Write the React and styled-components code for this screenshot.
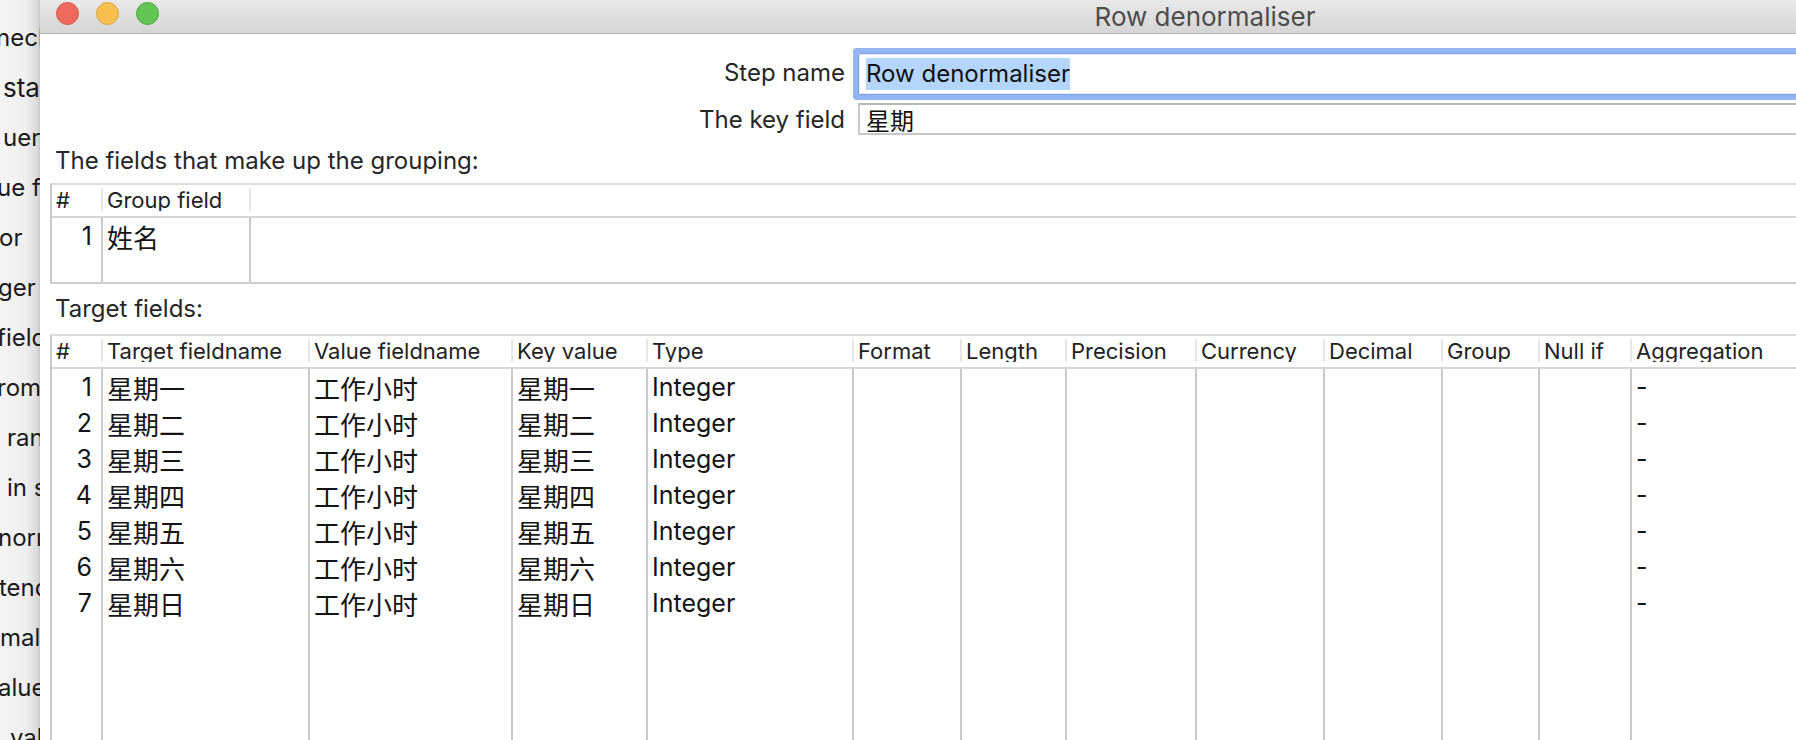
import React from 'react'
import styled, { createGlobalStyle } from 'styled-components'

const GlobalStyle = createGlobalStyle`
    html, body {
        margin: 0;
        padding: 0;
        background: #ececec;
        overflow: hidden;
    }
    body {
        font-family: Inter, "Noto Sans CJK SC", sans-serif;
        color: #1c1c1c;
    }
`

// text of the app window lying behind the dialog, only its right edge shows
const behindWords = [
    { text: 'neck', shift: -4 },
    { text: 'sta', shift: 3, size: 26 },
    { text: 'uery', shift: 3 },
    { text: 'ue field', shift: -3 },
    { text: 'or', shift: -1 },
    { text: 'ger', shift: -2 },
    { text: 'field', shift: -3 },
    { text: 'rom', shift: -3 },
    { text: 'range', shift: 7 },
    { text: 'in str', shift: 7 },
    { text: 'norm', shift: -2 },
    { text: 'tend', shift: -1 },
    { text: 'mal', shift: 0 },
    { text: 'alue', shift: -2 },
    { text: 'val', shift: 10 },
]

const days = ['一', '二', '三', '四', '五', '六', '日']
const rows = days.map((d, i) => ({
    nr: i + 1,
    target: '星期' + d,
    value: '工作小时',
    key: '星期' + d,
    type: 'Integer',
    agg: '-',
}))

const targetColumns = [
    { title: '#', width: '49px', get: r => r.nr, num: true },
    { title: 'Target fieldname', width: '207px', get: r => r.target, cjk: true },
    { title: 'Value fieldname', width: '203px', get: r => r.value, cjk: true },
    { title: 'Key value', width: '135px', get: r => r.key, cjk: true },
    { title: 'Type', width: '206px', get: r => r.type },
    { title: 'Format', width: '108px', get: () => '' },
    { title: 'Length', width: '105px', get: () => '' },
    { title: 'Precision', width: '130px', get: () => '' },
    { title: 'Currency', width: '128px', get: () => '' },
    { title: 'Decimal', width: '118px', get: () => '' },
    { title: 'Group', width: '97px', get: () => '' },
    { title: 'Null if', width: '92px', get: () => '' },
    { title: 'Aggregation', width: '1fr', get: r => r.agg },
]

const groupColumns = [
    { title: '#', width: '49px', get: r => r.nr, num: true },
    { title: 'Group field', width: '148px', get: r => r.name, cjk: true },
    { title: '', width: '1fr', get: () => '' },
]
const groupRows = [{ nr: 1, name: '姓名' }]

const FieldTable = ({ columns, data, bodyHeight, closed }) => {
    const template = columns.map(c => c.width).join(' ')
    return (
        <Table $closed={closed}>
            <HeaderRow $template={template}>
                {columns.map((c, i) => (
                    <HeaderCell key={i} $first={i === 0}>{c.title}</HeaderCell>
                ))}
            </HeaderRow>
            <Body $template={template} $height={bodyHeight}>
                {columns.map((c, i) => (
                    <BodyColumn key={i} $first={i === 0}>
                        {data.map((r, j) => (
                            <Cell key={j} $num={c.num} $cjk={c.cjk}>{c.get(r)}</Cell>
                        ))}
                    </BodyColumn>
                ))}
            </Body>
        </Table>
    )
}

const App = () => {
    return (
        <Screen>
            <GlobalStyle />
            <BehindApp>
                {behindWords.map((w, i) => (
                    <BehindLine key={i} $shift={w.shift} $size={w.size}>{w.text}</BehindLine>
                ))}
            </BehindApp>
            <Window>
                <TitleBar>
                    <Lights>
                        <Light $color='#ee6a5f' $edge='#d4574c' />
                        <Light $color='#f6bf4f' $edge='#d9a23d' />
                        <Light $color='#62c554' $edge='#4ea942' />
                    </Lights>
                    <Title>Row denormaliser</Title>
                </TitleBar>
                <Content>
                    <Form>
                        <Label $lh={40}>Step name</Label>
                        <StepInput>
                            <Selected>Row denormaliser</Selected>
                        </StepInput>
                        <Label $lh={34}>The key field</Label>
                        <KeyField>星期</KeyField>
                    </Form>
                    <SectionLabel $top={11} $bottom={7}>The fields that make up the grouping:</SectionLabel>
                    <FieldTable columns={groupColumns} data={groupRows} bodyHeight={64} closed />
                    <SectionLabel $top={10} $bottom={10}>Target fields:</SectionLabel>
                    <FieldTable columns={targetColumns} data={rows} bodyHeight={420} />
                </Content>
            </Window>
        </Screen>
    )
}

const Screen = styled.div`
    display: flex;
    width: 1796px;
    height: 740px;
    overflow: hidden;
`;

const BehindApp = styled.div`
    width: 40px;
    flex-shrink: 0;
    overflow: hidden;
    padding-top: 13px;
    box-sizing: border-box;
    background: linear-gradient(to right, #f4f4f4 0, #efefef 26px, #dadada 37px, #c6c6c6 40px);
`;

const BehindLine = styled.div`
    height: 50px;
    line-height: 50px;
    font-size: ${p => p.$size || 24}px;
    white-space: nowrap;
    color: #1a1a1a;
    margin-left: ${p => p.$shift}px;
`;

const Window = styled.div`
    width: 2330px;
    flex-shrink: 0;
    display: flex;
    flex-direction: column;
    background: #ffffff;
`;

const TitleBar = styled.div`
    height: 35px;
    box-sizing: border-box;
    display: grid;
    grid-template-columns: 1fr auto 1fr;
    align-items: start;
    background: linear-gradient(#e9e9e9, #d5d5d5);
    border-bottom: 1px solid #b4b4b4;
`;

const Lights = styled.div`
    display: flex;
    gap: 17px;
    padding: 2px 0 0 16px;
`;

const Light = styled.span`
    width: 23px;
    height: 23px;
    box-sizing: border-box;
    border-radius: 50%;
    background: ${p => p.$color};
    border: 1px solid ${p => p.$edge};
`;

const Title = styled.div`
    font-size: 26px;
    line-height: 33px;
    color: #4d4d4d;
`;

const Content = styled.div`
    padding: 19px 10px 0 10px;
    display: flex;
    flex-direction: column;
`;

const Form = styled.div`
    display: grid;
    grid-template-columns: 795px 1fr;
    column-gap: 13px;
    row-gap: 8px;
`;

const Label = styled.div`
    text-align: right;
    font-size: 24px;
    line-height: ${p => p.$lh}px;
    height: 32px;
    color: #262626;
`;

const StepInput = styled.div`
    height: 42px;
    box-sizing: border-box;
    display: flex;
    align-items: center;
    padding-left: 7px;
    border: 1px solid #7aa1e6;
    border-radius: 1px;
    box-shadow: 0 0 0 5px #93b5f3, inset 0 0 0 1px #e6edf9;
    font-size: 24px;
    color: #111;
`;

const Selected = styled.span`
    line-height: 32px;
    background: #b4d6fe;
`;

const KeyField = styled.div`
    height: 32px;
    box-sizing: border-box;
    display: flex;
    align-items: center;
    padding: 1px 0 0 6px;
    border: 2px solid #c8c8c8;
    border-top-color: #b8b8b8;
    font-size: 24px;
    color: #111;
`;

const SectionLabel = styled.div`
    height: 30px;
    line-height: 30px;
    font-size: 24px;
    color: #262626;
    padding-left: 5px;
    margin-top: ${p => p.$top}px;
    margin-bottom: ${p => p.$bottom}px;
`;

const Table = styled.div`
    border-left: 2px solid #c9c9c9;
    border-top: 2px solid #dcdcdc;
    border-bottom: ${p => (p.$closed ? '2px solid #cfcfcf' : 'none')};
`;

const HeaderRow = styled.div`
    display: grid;
    grid-template-columns: ${p => p.$template};
    height: 31px;
    border-bottom: 2px solid #d6d6d6;
`;

const HeaderCell = styled.div`
    margin: 3px 0 5px;
    display: flex;
    align-items: center;
    padding-left: 4px;
    border-left: ${p => (p.$first ? 'none' : '2px solid #e6e6e6')};
    font-size: 22px;
    color: #222;
    white-space: nowrap;
    overflow: hidden;
`;

const Body = styled.div`
    display: grid;
    grid-template-columns: ${p => p.$template};
    height: ${p => p.$height}px;
`;

const BodyColumn = styled.div`
    border-left: ${p => (p.$first ? 'none' : '2px solid #c9c9c9')};
    min-width: 0;
`;

const Cell = styled.div`
    height: 36px;
    display: flex;
    align-items: center;
    justify-content: ${p => (p.$num ? 'flex-end' : 'flex-start')};
    padding: ${p => (p.$num ? '0 9px 0 0' : '0 0 0 4px')};
    font-size: ${p => (p.$cjk ? '26px' : '25px')};
    color: #141414;
    white-space: nowrap;
    overflow: hidden;
`;

export default App
